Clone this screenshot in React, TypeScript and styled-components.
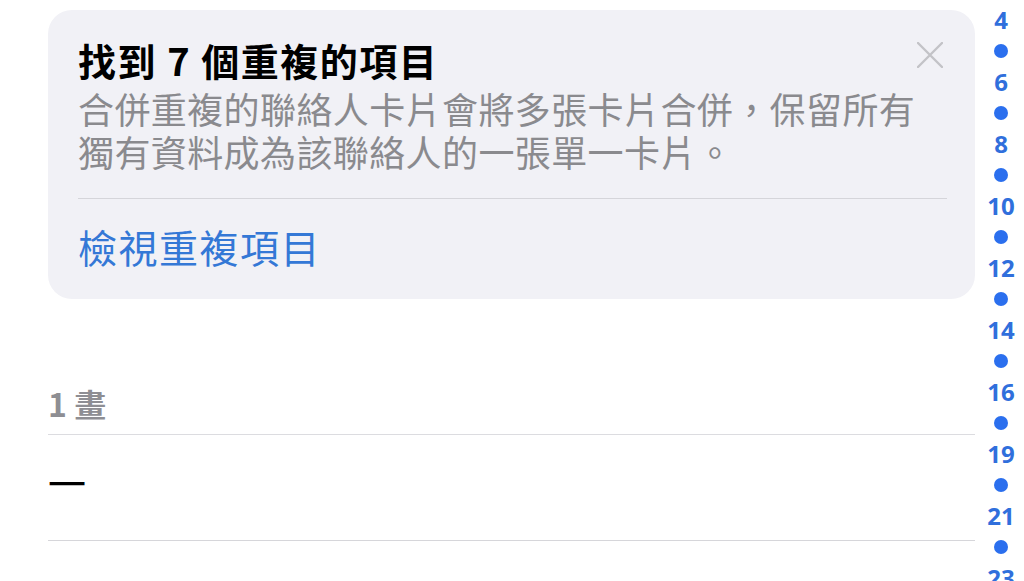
import React from 'react';
import styled, { createGlobalStyle } from 'styled-components';

const GlobalStyle = createGlobalStyle`
  html, body {
    margin: 0;
    padding: 0;
    background: #ffffff;
  }
  body {
    font-family: 'Noto Sans CJK TC', 'Noto Sans', sans-serif;
    -webkit-font-smoothing: antialiased;
  }
`;

const indexLabels = ['4', '6', '8', '10', '12', '14', '16', '19', '21', '23'];

const CloseIcon = () => (
  <svg width="26" height="26" viewBox="0 0 26 26" fill="none">
    <path d="M1 1 L25 25 M25 1 L1 25" stroke="#c3c3c7" strokeWidth="2.4" strokeLinecap="round" />
  </svg>
);

const App = () => (
  <React.Fragment>
    <GlobalStyle />
    <Page>
      <Main>
        <DuplicateCard>
          <CloseButton aria-label="關閉">
            <CloseIcon />
          </CloseButton>
          <CardTitle>找到 7 個重複的項目</CardTitle>
          <CardBody>
            合併重複的聯絡人卡片會將多張卡片合併，保留所有
            <br />
            獨有資料成為該聯絡人的一張單一卡片。
          </CardBody>
          <CardDivider />
          <CardLink>檢視重複項目</CardLink>
        </DuplicateCard>

        <SectionHeader>1 畫</SectionHeader>
        <ContactRow>一</ContactRow>
      </Main>

      <SectionIndex>
        {indexLabels.map((label, i) => (
          <React.Fragment key={label}>
            <IndexLabel>{label}</IndexLabel>
            {i < indexLabels.length - 1 && (
              <IndexDotRow>
                <IndexDot />
              </IndexDotRow>
            )}
          </React.Fragment>
        ))}
      </SectionIndex>
    </Page>
  </React.Fragment>
);

export default App;

const Page = styled('div')`
  display: flex;
  width: 1024px;
  height: 581px;
  overflow: hidden;
  padding-left: 48px;
  box-sizing: border-box;
`;

const Main = styled('main')`
  width: 927px;
  flex: none;
  padding-top: 10px;
`;

const DuplicateCard = styled('section')`
  position: relative;
  display: flex;
  flex-direction: column;
  background: #f1f1f6;
  border-radius: 24px;
  padding: 28px 28px 28px 30px;
  height: 289px;
  box-sizing: border-box;
`;

const CloseButton = styled('button')`
  position: absolute;
  top: 32px;
  right: 32px;
  display: flex;
  padding: 0;
  border: 0;
  background: none;
`;

const CardTitle = styled('h2')`
  margin: 0;
  font-size: 38px;
  line-height: 44px;
  font-weight: 700;
  color: #000000;
  letter-spacing: 1.5px;
`;

const CardBody = styled('p')`
  margin: 5px 0 0 0;
  font-size: 36px;
  line-height: 43px;
  color: #8a8a8e;
  letter-spacing: 0.4px;
`;

const CardDivider = styled('hr')`
  margin: 25px 0 0 0;
  border: 0;
  height: 1px;
  background: #d5d5da;
`;

const CardLink = styled('a')`
  margin-top: 23px;
  font-size: 39px;
  line-height: 48px;
  color: #3478d6;
  letter-spacing: 1.5px;
`;

const SectionHeader = styled('h3')`
  margin: 84px 0 0 0;
  padding-bottom: 11px;
  font-size: 32px;
  line-height: 40px;
  font-weight: 700;
  color: #8e8e93;
  border-bottom: 1px solid #dcdce0;
`;

const ContactRow = styled('div')`
  display: flex;
  align-items: center;
  height: 106px;
  padding-bottom: 12px;
  box-sizing: border-box;
  font-size: 38px;
  color: #000000;
  border-bottom: 1px solid #d6d6da;
`;

const SectionIndex = styled('nav')`
  flex: 1;
  display: flex;
  flex-direction: column;
  align-items: center;
  padding: 4px 0 0 3px;
`;

const IndexLabel = styled('span')`
  flex: none;
  height: 31px;
  line-height: 31px;
  font-family: 'Noto Sans', 'Liberation Sans', sans-serif;
  font-size: 24px;
  font-weight: 700;
  color: #306fdc;
`;

const IndexDotRow = styled('span')`
  flex: none;
  height: 31px;
  display: flex;
  align-items: center;
`;

const IndexDot = styled('span')`
  width: 14px;
  height: 14px;
  border-radius: 50%;
  background: #2b6fee;
`;
